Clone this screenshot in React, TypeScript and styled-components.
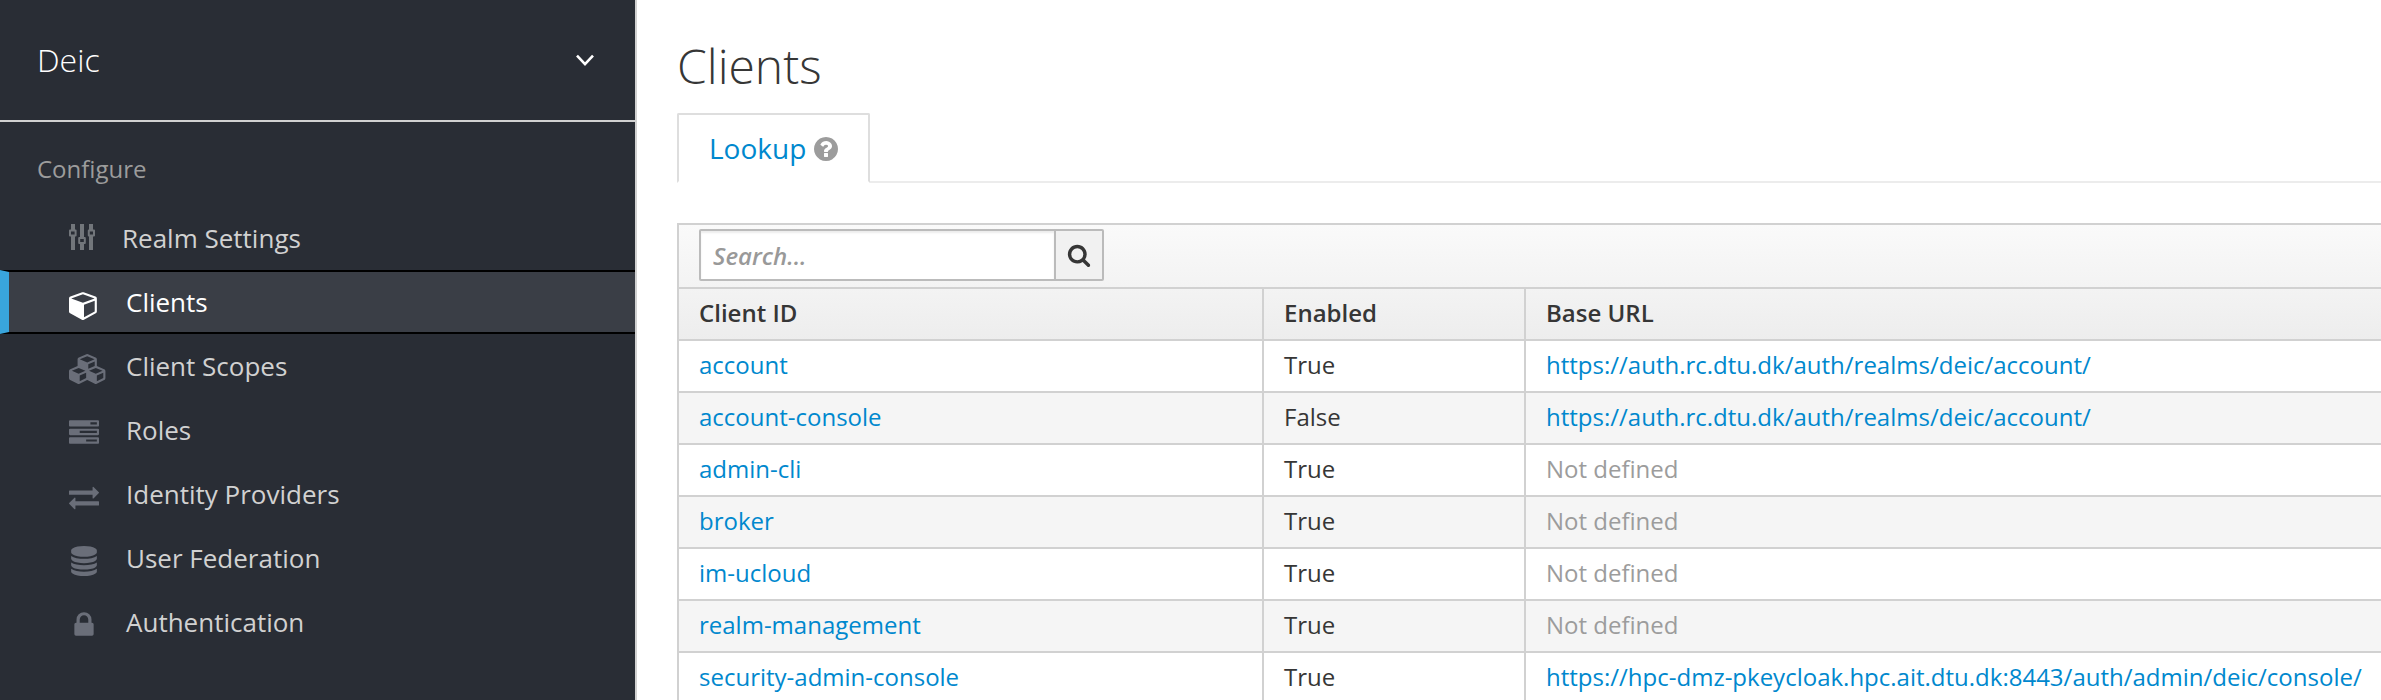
import React from 'react';
import styled, { createGlobalStyle, css } from 'styled-components';

const GlobalStyle = createGlobalStyle`
  *, *::before, *::after { box-sizing: border-box; }
  html, body, #root { margin: 0; height: 100%; }
  body {
    overflow: hidden;
    background: #fff;
    color: #363636;
    font-family: 'Open Sans', 'Noto Sans', sans-serif;
    font-size: 24px;
    line-height: 40px;
  }
  a { color: #0088ce; text-decoration: none; }
`;

const Page = styled.div`
  display: flex;
  height: 700px;
  overflow: hidden;
`;

const Sidebar = styled.aside`
  flex: 0 0 637px;
  background: #292d35;
  border-right: 2px solid #d1d1d1;
`;

const RealmSelector = styled.div`
  display: flex;
  align-items: center;
  justify-content: space-between;
  height: 122px;
  padding: 0 41px 0 37px;
  border-bottom: 2px solid #d1d1d1;
  color: #fff;
  font-size: 32px;
  font-weight: 300;
`;

const SectionTitle = styled.h2`
  margin: 0;
  padding: 27px 0 0 37px;
  height: 84px;
  color: #9c9c9c;
  font-size: 24px;
  font-weight: 400;
  line-height: 40px;
`;

const Nav = styled.nav`
  display: flex;
  flex-direction: column;
`;

const NavItem = styled.a<{ $active?: boolean }>`
  display: flex;
  align-items: center;
  height: 64px;
  padding-left: 60px;
  border: 0 solid #000;
  border-left: 9px solid transparent;
  && { color: #d1d1d1; }
  font-size: 26px;
  ${p => p.$active && css`
    && { color: #fff; }
    background: #3a3e46;
    border-width: 2px 0 2px 9px;
    border-left-color: #39a5dc;
  `}
`;

const NavIcon = styled.span<{ $w: number; $color: string; $dy?: number }>`
  display: flex;
  flex: 0 0 ${p => p.$w}px;
  color: ${p => p.$color};
  margin-top: ${p => p.$dy ?? 6}px;
  svg { overflow: visible; flex: none; }
`;

const Main = styled.main`
  flex: 1;
  min-width: 0;
  padding: 33px 0 0 40px;
`;

const Title = styled.h1`
  margin: 0;
  height: 80px;
  font-size: 48px;
  font-weight: 300;
  line-height: 66px;
`;

const Tabs = styled.div`
  display: flex;
  height: 70px;
  border-bottom: 2px solid #ececec;
`;

const Tab = styled.a`
  display: flex;
  align-items: center;
  gap: 6px;
  width: 193px;
  height: 70px;
  padding-left: 30px;
  background: #fff;
  border: 2px solid #dedede;
  border-bottom-color: #fff;
  border-radius: 2px 2px 0 0;
  font-size: 28px;
`;

const HelpIcon = styled.span`
  display: flex;
  margin-top: 2px;
  color: #9c9c9c;
`;

const TableFrame = styled.section`
  margin-top: 40px;
  border: solid #d1d1d1;
  border-width: 2px 0 0 2px;
`;

const TableHead = styled.div`
  background: linear-gradient(#fafafa, #ededed);
`;

const Toolbar = styled.div`
  display: flex;
  height: 64px;
  padding: 4px 0 0 20px;
  border-bottom: 2px solid #d1d1d1;
`;

const SearchInput = styled.input`
  width: 357px;
  height: 52px;
  padding: 0 0 0 12px;
  border: 2px solid #bbb;
  border-radius: 2px 0 0 2px;
  background: #fff;
  box-shadow: inset 0 2px 2px rgba(0, 0, 0, 0.075);
  font: inherit;
  outline: none;
  &::placeholder {
    color: #999;
    opacity: 1;
    font-style: italic;
    font-weight: 600;
  }
`;

const SearchButton = styled.button`
  display: flex;
  align-items: center;
  justify-content: center;
  width: 50px;
  height: 52px;
  margin-left: -2px;
  padding: 0;
  border: 2px solid #bbb;
  border-radius: 0 2px 2px 0;
  background: #f1f1f1;
  color: #363636;
`;

const Row = styled.div<{ $striped?: boolean; $head?: boolean }>`
  display: grid;
  grid-template-columns: 585px 262px 1fr;
  height: 52px;
  border-bottom: 2px solid #d1d1d1;
  background: ${p => (p.$head ? 'transparent' : p.$striped ? '#f5f5f5' : '#fff')};
  font-weight: ${p => (p.$head ? 600 : 400)};
`;

const Cell = styled.div<{ $muted?: boolean }>`
  padding: 4px 0 0 20px;
  border-right: 2px solid #d1d1d1;
  white-space: nowrap;
  color: ${p => (p.$muted ? '#9c9c9c' : 'inherit')};
  &:last-child { border-right: 0; }
`;

const PATHS = {
  cube: 'M896 1629l640-349v-636l-640 233v752zm-64-865l698-254-698-254-698 254zm832-252v768q0 35-18 65t-49 47l-704 384q-28 16-61 16t-61-16l-704-384q-31-17-49-47t-18-65v-768q0-40 23-73t61-47l704-256q22-8 44-8t44 8l704 256q38 14 61 47t23 73z',
  cubes: 'M640 1632l384-192v-314l-384 164v342zm-64-454l404-173-404-173-404 173zm1088 454l384-192v-314l-384 164v342zm-64-454l404-173-404-173-404 173zm-448-293l384-165v-266l-384 164v267zm-64-379l441-189-441-189-441 189zm1088 518v416q0 36-19 67t-52 47l-448 224q-25 14-57 14t-57-14l-448-224q-4-2-7-4-2 2-7 4l-448 224q-25 14-57 14t-57-14l-448-224q-33-16-52-47t-19-67v-416q0-38 21.5-70t56.5-48l434-186v-400q0-38 21.5-70t56.5-48l448-192q23-10 50-10t50 10l448 192q35 16 56.5 48t21.5 70v400l434 186q36 16 57 48t21 70z',
  tasks: 'M1024 1408h640v-128h-640v128zm-384-512h1024v-128h-1024v128zm640-512h384v-128h-384v128zm512 832v256q0 26-19 45t-45 19h-1664q-26 0-45-19t-19-45v-256q0-26 19-45t45-19h1664q26 0 45 19t19 45zm0-512v256q0 26-19 45t-45 19h-1664q-26 0-45-19t-19-45v-256q0-26 19-45t45-19h1664q26 0 45 19t19 45zm0-512v256q0 26-19 45t-45 19h-1664q-26 0-45-19t-19-45v-256q0-26 19-45t45-19h1664q26 0 45 19t19 45z',
  exchange: 'M1792 1184v192q0 13-9.5 22.5t-22.5 9.5h-1376v192q0 13-9.5 22.5t-22.5 9.5q-12 0-24-10l-319-320q-9-9-9-22 0-14 9-23l320-320q9-9 23-9 13 0 22.5 9.5t9.5 22.5v192h1376q13 0 22.5 9.5t9.5 22.5zm0-544q0 14-9 23l-320 320q-9 9-23 9-13 0-22.5-9.5t-9.5-22.5v-192h-1376q-13 0-22.5-9.5t-9.5-22.5v-192q0-13 9.5-22.5t22.5-9.5h1376v-192q0-14 9-23t23-9q12 0 24 10l319 319q9 9 9 23z',
  database: 'M896 768q237 0 443-43t325-127v170q0 69-103 128t-280 93.5-385 34.5-385-34.5-280-93.5-103-128v-170q119 84 325 127t443 43zm0 768q237 0 443-43t325-127v170q0 69-103 128t-280 93.5-385 34.5-385-34.5-280-93.5-103-128v-170q119 84 325 127t443 43zm0-384q237 0 443-43t325-127v170q0 69-103 128t-280 93.5-385 34.5-385-34.5-280-93.5-103-128v-170q119 84 325 127t443 43zm0-1152q208 0 385 34.5t280 93.5 103 128v128q0 69-103 128t-280 93.5-385 34.5-385-34.5-280-93.5-103-128v-128q0-69 103-128t280-93.5 385-34.5z',
  lock: 'M640 768h512v-192q0-106-75-181t-181-75-181 75-75 181v192zm832 96v576q0 40-28 68t-68 28h-960q-40 0-68-28t-28-68v-576q0-40 28-68t68-28h32v-192q0-184 132-316t316-132 316 132 132 316v192h32q40 0 68 28t28 68z',
  help: 'M1024 1376v-192q0-14-9-23t-23-9h-192q-14 0-23 9t-9 23v192q0 14 9 23t23 9h192q14 0 23-9t9-23zm256-672q0-88-55.5-163t-138.5-116-170-41q-243 0-371 213-15 24 8 42l132 100q7 6 19 6 16 0 25-12 53-68 86-92 34-24 86-24 48 0 85.5 26t37.5 59q0 38-20 61t-68 45q-63 28-115.5 86.5t-52.5 125.5v36q0 14 9 23t23 9h192q14 0 23-9t9-23q0-19 21.5-49.5t54.5-49.5q32-18 49-28.5t46-35 44.5-48 28-60.5 12.5-81zm384 192q0 209-103 385.5t-279.5 279.5-385.5 103-385.5-103-279.5-279.5-103-385.5 103-385.5 279.5-279.5 385.5-103 385.5 103 279.5 279.5 103 385.5z',
  search: 'M1216 832q0-185-131.5-316.5t-316.5-131.5-316.5 131.5-131.5 316.5 131.5 316.5 316.5 131.5 316.5-131.5 131.5-316.5zm512 832q0 52-38 90t-90 38q-54 0-90-38l-343-342q-179 124-399 124-143 0-273.5-55.5t-225-150-150-225-55.5-273.5 55.5-273.5 150-225 225-150 273.5-55.5 273.5 55.5 225 150 150 225 55.5 273.5q0 220-124 399l343 343q37 37 37 90z',
};

type IconName = keyof typeof PATHS;

function Icon({ name, size = 30 }: { name: IconName; size?: number }) {
  return (
    <svg width={size} height={size} viewBox="0 0 1792 1792" fill="currentColor" aria-hidden="true">
      <path d={PATHS[name]} />
    </svg>
  );
}

function SlidersIcon() {
  return (
    <svg width="26" height="26" viewBox="0 0 26 26" fill="none" stroke="currentColor" aria-hidden="true">
      <path d="M4 0v6M4 12v14M13 0v13M13 19v7M22 0v6M22 12v14" strokeWidth="4" />
      <path d="M1 6.6h5.6v5H1zM10.2 14h5.6v5h-5.6zM19.8 6.6h5.2v5h-5.2z" strokeWidth="2" strokeLinejoin="round" />
    </svg>
  );
}

function ChevronDown() {
  return (
    <svg width="18" height="14" viewBox="0 0 18 14" fill="none" stroke="currentColor" strokeWidth="2.6" aria-hidden="true">
      <path d="M1 2.6l8 8.6 8-8.6" />
    </svg>
  );
}

const NAV: { label: string; icon: IconName }[] = [
  { label: 'Clients', icon: 'cube' },
  { label: 'Client Scopes', icon: 'cubes' },
  { label: 'Roles', icon: 'tasks' },
  { label: 'Identity Providers', icon: 'exchange' },
  { label: 'User Federation', icon: 'database' },
  { label: 'Authentication', icon: 'lock' },
];

const ACCOUNT_URL = 'https://auth.rc.dtu.dk/auth/realms/deic/account/';

const CLIENTS: { id: string; enabled: boolean; url?: string }[] = [
  { id: 'account', enabled: true, url: ACCOUNT_URL },
  { id: 'account-console', enabled: false, url: ACCOUNT_URL },
  { id: 'admin-cli', enabled: true },
  { id: 'broker', enabled: true },
  { id: 'im-ucloud', enabled: true },
  { id: 'realm-management', enabled: true },
  {
    id: 'security-admin-console',
    enabled: true,
    url: 'https://hpc-dmz-pkeycloak.hpc.ait.dtu.dk:8443/auth/admin/deic/console/',
  },
];

export default function App() {
  return (
    <>
      <GlobalStyle />
      <Page>
        <Sidebar>
          <RealmSelector>
            Deic
            <ChevronDown />
          </RealmSelector>
          <SectionTitle>Configure</SectionTitle>
          <Nav>
            <NavItem href="#">
              <NavIcon $w={53} $color="#72767b" $dy={-3}><SlidersIcon /></NavIcon>
              Realm Settings
            </NavItem>
            {NAV.map(item => (
              <NavItem key={item.label} href="#" $active={item.label === 'Clients'}>
                <NavIcon $w={57} $color={item.label === 'Clients' ? '#fff' : '#6a6e79'}>
                  <Icon name={item.icon} />
                </NavIcon>
                {item.label}
              </NavItem>
            ))}
          </Nav>
        </Sidebar>
        <Main>
          <Title>Clients</Title>
          <Tabs>
            <Tab href="#">
              Lookup
              <HelpIcon><Icon name="help" size={28} /></HelpIcon>
            </Tab>
          </Tabs>
          <TableFrame>
            <TableHead>
              <Toolbar>
                <SearchInput placeholder="Search..." />
                <SearchButton aria-label="Search"><Icon name="search" size={24} /></SearchButton>
              </Toolbar>
              <Row $head>
                <Cell>Client ID</Cell>
                <Cell>Enabled</Cell>
                <Cell>Base URL</Cell>
              </Row>
            </TableHead>
            {CLIENTS.map((client, i) => (
              <Row key={client.id} $striped={i % 2 === 1}>
                <Cell><a href="#">{client.id}</a></Cell>
                <Cell>{client.enabled ? 'True' : 'False'}</Cell>
                <Cell $muted={!client.url}>
                  {client.url ? <a href="#">{client.url}</a> : 'Not defined'}
                </Cell>
              </Row>
            ))}
          </TableFrame>
        </Main>
      </Page>
    </>
  );
}
